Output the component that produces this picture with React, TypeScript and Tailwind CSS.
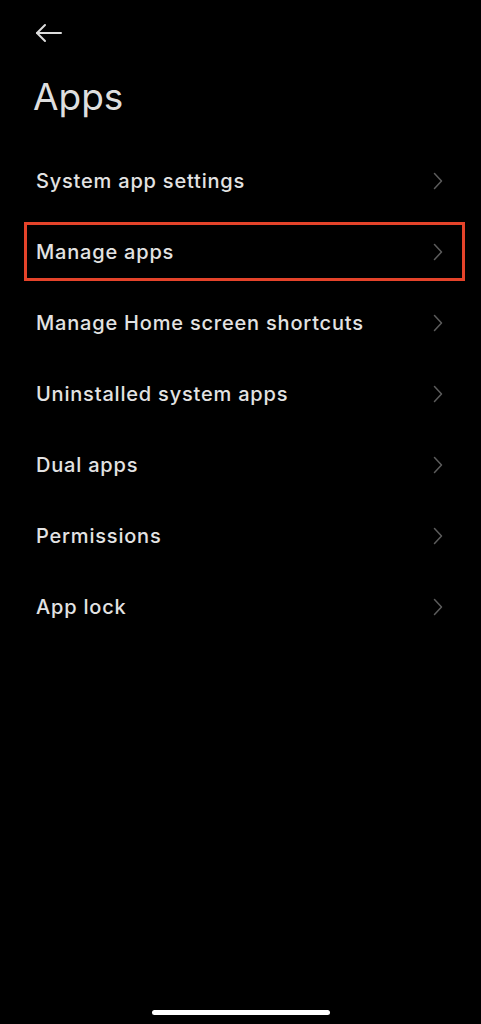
const items = [
  "System app settings",
  "Manage apps",
  "Manage Home screen shortcuts",
  "Uninstalled system apps",
  "Dual apps",
  "Permissions",
  "App lock",
];

const Chevron = () => (
  <svg width="10" height="18" viewBox="0 0 10 18" fill="none" stroke="#5c5c5c" strokeWidth="1.5" strokeLinecap="round" strokeLinejoin="round">
    <path d="M1.5 1.5l7 7.5-7 7.5" />
  </svg>
);

const App = () => {
  return (
    <div
      className="flex flex-col h-[1024px] w-full bg-black text-[#e3e3e3]"
      style={{ fontFamily: "Inter, 'Noto Sans', sans-serif" }}
    >
      {/* Back */}
      <div className="pt-[22px] pl-[34px]">
        <svg width="30" height="22" viewBox="0 0 30 22" fill="none" stroke="#dcdcdc" strokeWidth="2" strokeLinecap="round" strokeLinejoin="round">
          <path d="M3 11h24" />
          <path d="M11 3l-8 8 8 8" />
        </svg>
      </div>

      <h1 className="mt-[34px] pl-[33px] text-[37px] leading-none font-normal text-[#dedede]">Apps</h1>

      <div className="mt-[30px] flex flex-col">
        {items.map((item) => {
          const active = item === "Manage apps";
          return (
            <div key={item} className="pl-[24px] pr-[16px] py-[6px]">
              <div
                className={`flex items-center justify-between h-[59px] pl-[9px] pr-[19px] border-[3px] ${
                  active ? "border-[#e5432a]" : "border-transparent"
                }`}
              >
                <span className="text-[20px] font-medium tracking-[0.8px]">{item}</span>
                <Chevron />
              </div>
            </div>
          );
        })}
      </div>

      <div className="flex-1" />
      <div className="mx-auto mb-[9px] h-[5px] w-[178px] rounded-full bg-white" />
    </div>
  );
};

export default App;
